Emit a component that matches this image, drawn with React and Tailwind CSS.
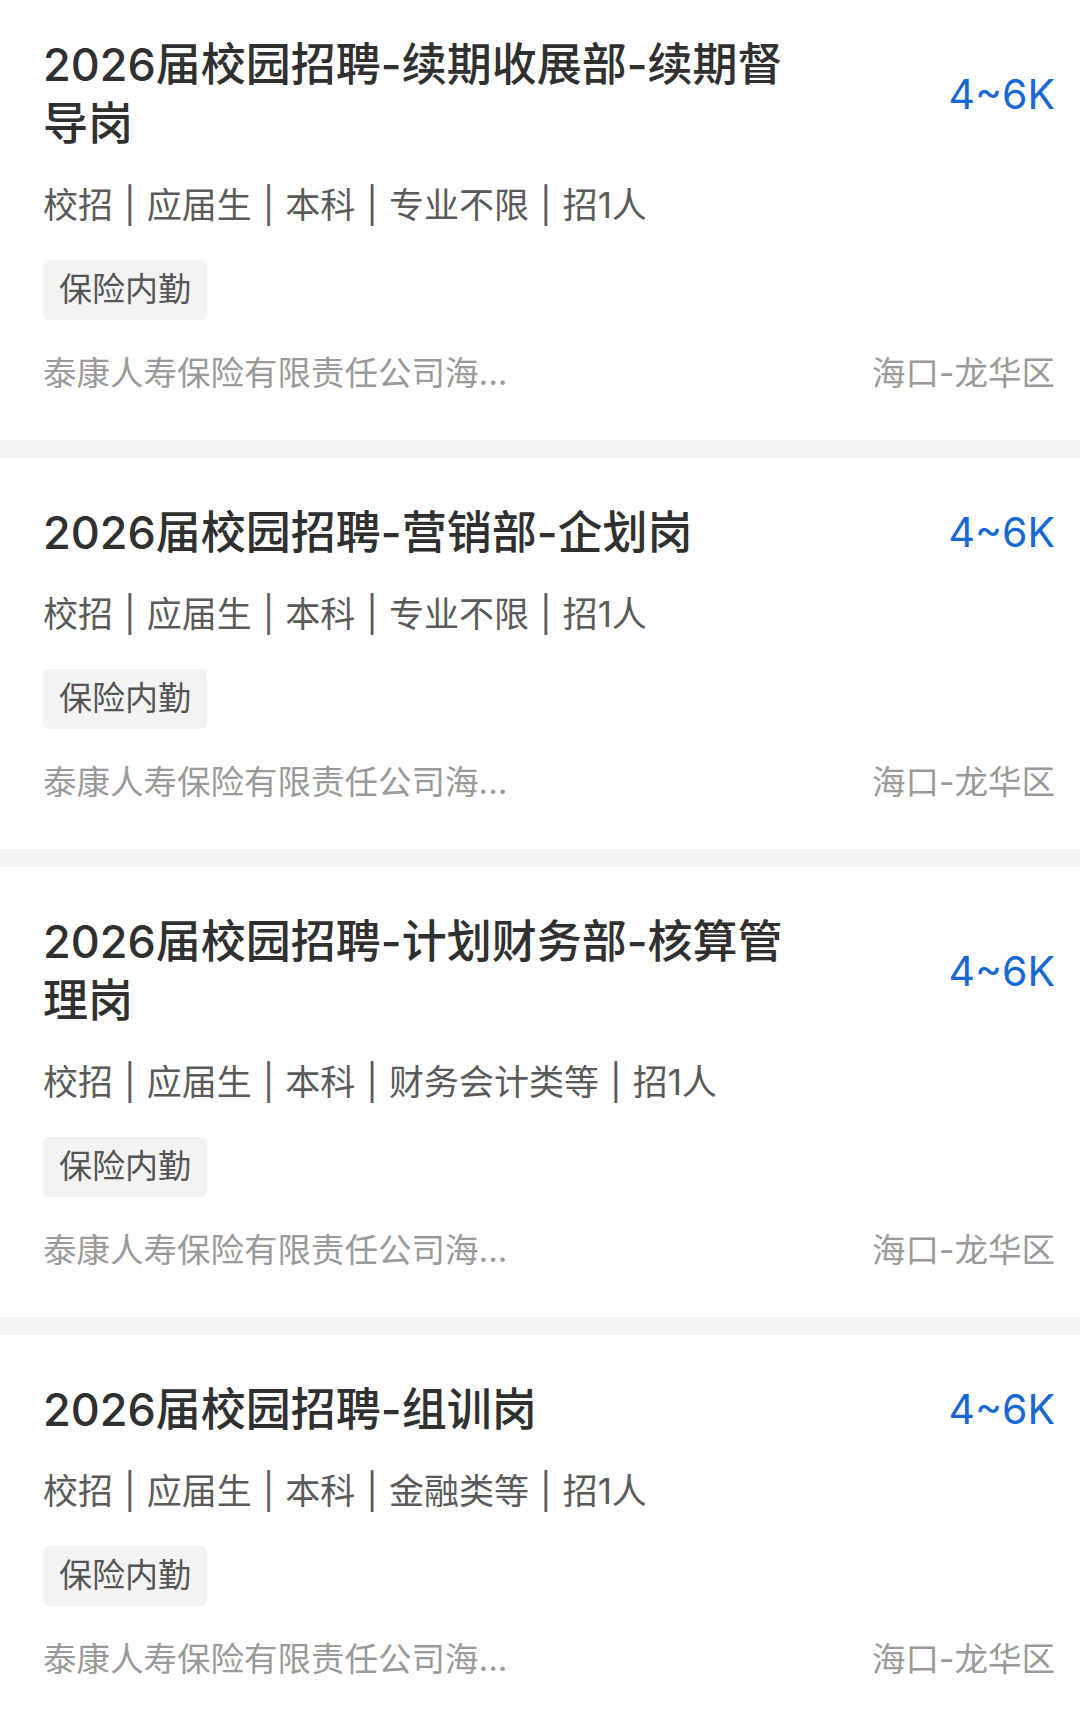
import React from "react";

const jobs = [
  {
    title: "2026届校园招聘-续期收展部-续期督导岗",
    salary: "4~6K",
    meta: ["校招", "应届生", "本科", "专业不限", "招1人"],
    tag: "保险内勤",
    company: "泰康人寿保险有限责任公司海...",
    area: "海口-龙华区",
  },
  {
    title: "2026届校园招聘-营销部-企划岗",
    salary: "4~6K",
    meta: ["校招", "应届生", "本科", "专业不限", "招1人"],
    tag: "保险内勤",
    company: "泰康人寿保险有限责任公司海...",
    area: "海口-龙华区",
  },
  {
    title: "2026届校园招聘-计划财务部-核算管理岗",
    salary: "4~6K",
    meta: ["校招", "应届生", "本科", "财务会计类等", "招1人"],
    tag: "保险内勤",
    company: "泰康人寿保险有限责任公司海...",
    area: "海口-龙华区",
  },
  {
    title: "2026届校园招聘-组训岗",
    salary: "4~6K",
    meta: ["校招", "应届生", "本科", "金融类等", "招1人"],
    tag: "保险内勤",
    company: "泰康人寿保险有限责任公司海...",
    area: "海口-龙华区",
  },
];

const JobCard = ({ job }) => {
  return (
    <div className="bg-white pl-[43px] pr-[25px] pt-[45px] pb-[45px] first:pt-[35px]">
      <div className="flex items-center justify-between">
        <h2 className="max-w-[750px] text-[45px] leading-[59px] font-medium text-[#303030]">
          {job.title}
        </h2>
        <span className="shrink-0 text-[41px] leading-[59px] text-[#1768d3]">
          {job.salary}
        </span>
      </div>

      <div className="mt-[28px] text-[35px] leading-[48px] text-[#5a5a5a] whitespace-nowrap">
        {job.meta.map((m, i) => (
          <React.Fragment key={i}>
            {i > 0 && <span className="px-[11px]">|</span>}
            {m}
          </React.Fragment>
        ))}
      </div>

      <div className="mt-[31px]">
        <span className="inline-flex items-center h-[60px] px-[16px] rounded-[6px] bg-[#f3f3f3] text-[33px] text-[#555555]">
          {job.tag}
        </span>
      </div>

      <div className="mt-[31px] flex items-center justify-between text-[33.5px] leading-[44px] text-[#9a9a9a]">
        <span>{job.company}</span>
        <span>{job.area}</span>
      </div>
    </div>
  );
};

export default function App() {
  return (
    <div className="w-[1080px] min-h-[1709px] bg-[#f5f5f7] font-['Inter','Noto_Sans_CJK_SC',sans-serif]">
      <div className="flex flex-col gap-[18px]">
        {jobs.map((job, i) => (
          <JobCard key={i} job={job} />
        ))}
      </div>
    </div>
  );
}
